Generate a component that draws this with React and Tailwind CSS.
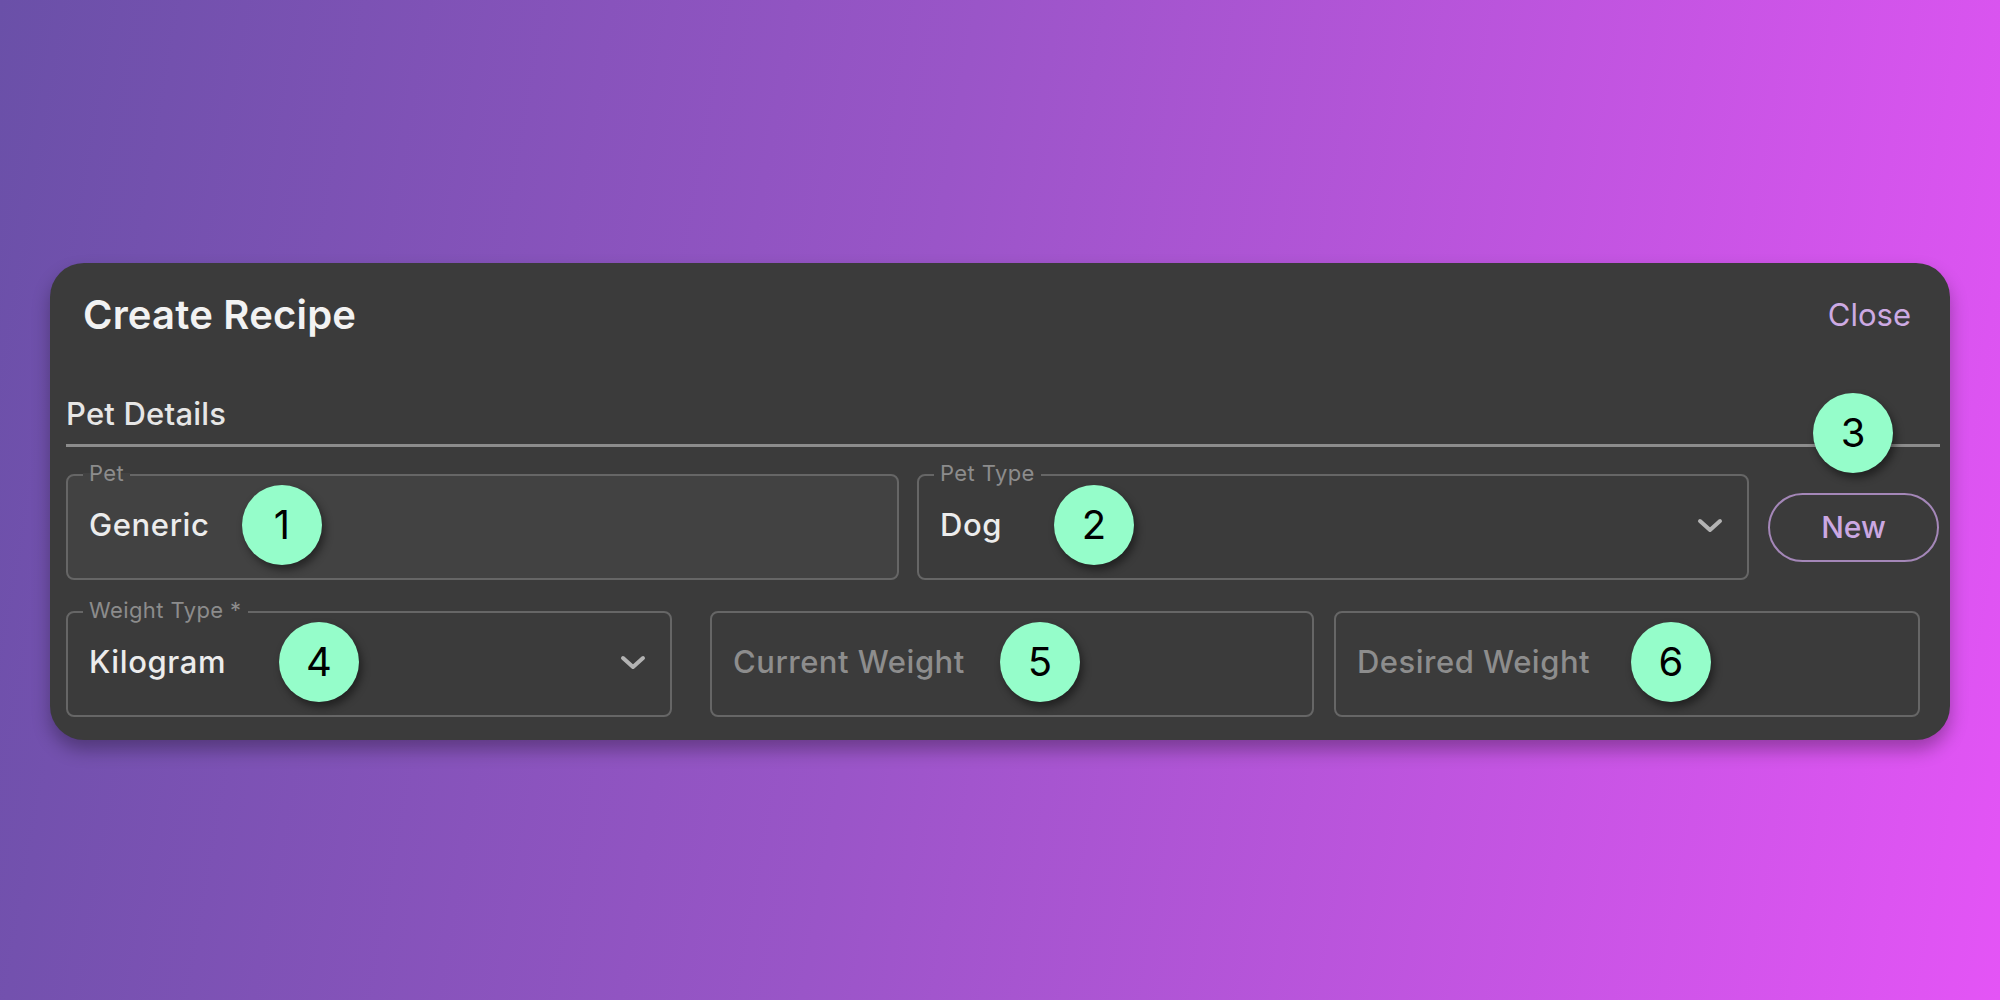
import React from 'react';

function Badge({ n, className = '' }) {
  return (
    <span
      className={`absolute w-[80px] h-[80px] rounded-full bg-[#95fdca] flex items-center justify-center text-[40px] leading-none font-normal text-black shadow-[3px_5px_8px_rgba(0,0,0,0.45)] ${className}`}
    >
      {n}
    </span>
  );
}

function Chevron() {
  return (
    <svg width="26" height="15" viewBox="0 0 26 15" className="shrink-0">
      <path d="M3 3 L13 12 L23 3" fill="none" stroke="#b3b3b3" strokeWidth="4" strokeLinecap="round" strokeLinejoin="round" />
    </svg>
  );
}

function Field({ label, value, placeholder, select, filled, className = '', children }) {
  return (
    <div
      className={`relative h-[106px] border-2 border-[#666666] rounded-[8px] flex items-center pl-[21px] pr-[24px] pb-[3px] ${filled ? 'bg-[#424242]' : 'bg-[#3b3b3b]'} ${className}`}
    >
      {label && (
        <span
          className={`absolute left-[15px] top-[-14px] px-[6px] text-[22px] leading-[22px] tracking-[0.4px] text-[#8c8c8c] ${filled ? 'bg-[linear-gradient(#3b3b3b_50%,#424242_50%)]' : 'bg-[#3b3b3b]'}`}
        >
          {label}
        </span>
      )}
      {value ? (
        <span className="text-[31px] font-medium tracking-[0.6px] text-[#ececec]">{value}</span>
      ) : (
        <span className="text-[31px] font-medium tracking-[0.5px] text-[#8d8d8d]">{placeholder}</span>
      )}
      <div className="flex-1" />
      {select && <Chevron />}
      {children}
    </div>
  );
}

export default function App() {
  return (
    <div className="h-screen w-full flex items-center justify-center bg-[linear-gradient(100deg,#6a50a8_0%,#9a55c8_45%,#e454f6_100%)] font-['Inter',sans-serif]">
      <div className="w-[1900px] mt-[3px] bg-[#3b3b3b] rounded-[34px] pl-[16px] pr-[10px] pb-[23px] shadow-[0_10px_18px_rgba(0,0,0,0.3)]">
        {/* header */}
        <div className="h-[104px] flex items-center justify-between pl-[17px] pr-[29px]">
          <h1 className="text-[40px] font-semibold text-[#f2f2f2] tracking-[0.2px]">Create Recipe</h1>
          <button className="text-[31px] text-[#cdaae3]">Close</button>
        </div>

        <div className="mt-[27px] h-[40px] flex items-center text-[31px] font-medium tracking-[0.2px] text-[#e6e6e6]">Pet Details</div>
        <div className="mt-[10px] h-[3px] bg-[#8c8c8c]" />

        {/* row 1 */}
        <div className="mt-[27px] flex items-center">
          <Field label="Pet" value="Generic" filled className="w-[833px]">
            <Badge n="1" className="left-[174px] top-[9px]" />
          </Field>
          <Field label="Pet Type" value="Dog" select className="w-[832px] ml-[18px]">
            <Badge n="2" className="left-[135px] top-[9px]" />
          </Field>
          <div className="relative ml-[19px]">
            <button className="w-[171px] h-[69px] rounded-full border-2 border-[#a487b8] text-[30px] font-medium text-[#cba8e2]">New</button>
            <Badge n="3" className="left-[45px] top-[-100px]" />
          </div>
        </div>

        {/* row 2 */}
        <div className="mt-[31px] flex items-center">
          <Field label="Weight Type *" value="Kilogram" select className="w-[606px]">
            <Badge n="4" className="left-[211px] top-[9px]" />
          </Field>
          <Field placeholder="Current Weight" className="w-[604px] ml-[38px]">
            <Badge n="5" className="left-[288px] top-[9px]" />
          </Field>
          <Field placeholder="Desired Weight" className="w-[586px] ml-[20px]">
            <Badge n="6" className="left-[295px] top-[9px]" />
          </Field>
        </div>
      </div>
    </div>
  );
}
